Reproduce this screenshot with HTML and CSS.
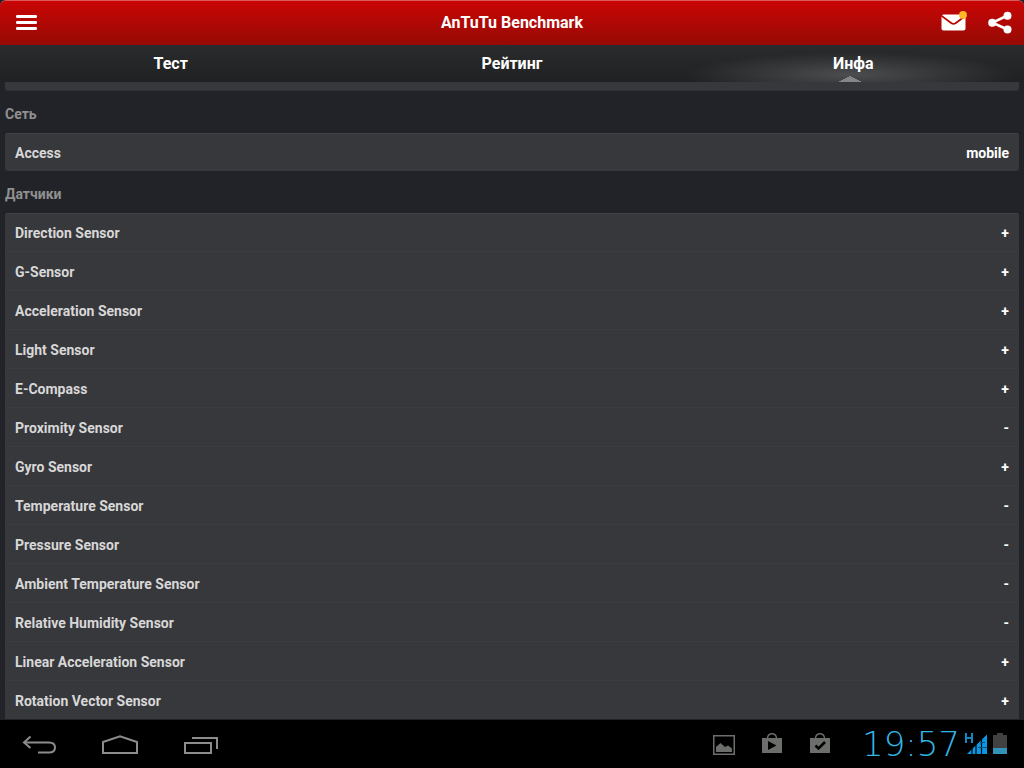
FILE: index.html
```html
<!DOCTYPE html>
<html lang="ru">
<head>
<meta charset="utf-8">
<meta name="viewport" content="width=device-width, initial-scale=1">
<title>AnTuTu Benchmark</title>
<link rel="stylesheet" href="styles.css">
</head>
<body>
<header class="topbar">
  <button class="icon-btn" type="button" aria-label="Menu">
    <svg width="22" height="16" viewBox="0 0 22 16" fill="#fff"><rect x="0" y="0" width="21" height="3" rx="1.3"/><rect x="0" y="6" width="21" height="3" rx="1.3"/><rect x="0" y="12" width="21" height="3" rx="1.3"/></svg>
  </button>
  <h1 class="app-title">AnTuTu Benchmark</h1>
  <div class="actions">
    <button class="icon-btn" type="button" aria-label="Messages">
      <svg width="26" height="24" viewBox="0 0 26 24"><path d="M0.5 5.500 Q0.5 3.500 2.5 3.500 H22.5 Q24.5 3.500 24.5 5.500 V17.500 Q24.5 19.500 22.5 19.500 H2.500 Q0.500 19.500 0.500 17.500Z" fill="#fff"/><path d="M0 4.500 L10.500 12.200 Q12.500 13.500 14.500 12.200 L25 4.500" fill="none" stroke="#b80703" stroke-width="1.800"/><circle cx="22" cy="3.900" r="3.900" fill="#fdb927"/></svg>
    </button>
    <button class="icon-btn" type="button" aria-label="Share">
      <svg width="24" height="24" viewBox="0 0 24 24" fill="#fff"><path d="M19.500 4.500 L4.500 11.700 L19.500 18.500" fill="none" stroke="#fff" stroke-width="2.600"/><circle cx="4.200" cy="11.700" r="4"/><circle cx="19.500" cy="4.800" r="4"/><circle cx="19.500" cy="18.400" r="4"/></svg>
    </button>
  </div>
</header>
<nav class="tabs">
  <button class="tab" type="button">Тест</button>
  <button class="tab" type="button">Рейтинг</button>
  <button class="tab tab-active" type="button" aria-current="page">Инфа</button>
</nav>
<main class="content">
  <div class="panel panel-end"></div>
  <h2 class="section-title">Сеть</h2>
  <table class="panel">
    <tbody>
      <tr><th scope="row">Access</th><td>mobile</td></tr>
    </tbody>
  </table>
  <h2 class="section-title">Датчики</h2>
  <table class="panel panel-open">
    <tbody>
      <tr><th scope="row">Direction Sensor</th><td>+</td></tr>
      <tr><th scope="row">G-Sensor</th><td>+</td></tr>
      <tr><th scope="row">Acceleration Sensor</th><td>+</td></tr>
      <tr><th scope="row">Light Sensor</th><td>+</td></tr>
      <tr><th scope="row">E-Compass</th><td>+</td></tr>
      <tr><th scope="row">Proximity Sensor</th><td>-</td></tr>
      <tr><th scope="row">Gyro Sensor</th><td>+</td></tr>
      <tr><th scope="row">Temperature Sensor</th><td>-</td></tr>
      <tr><th scope="row">Pressure Sensor</th><td>-</td></tr>
      <tr><th scope="row">Ambient Temperature Sensor</th><td>-</td></tr>
      <tr><th scope="row">Relative Humidity Sensor</th><td>-</td></tr>
      <tr><th scope="row">Linear Acceleration Sensor</th><td>+</td></tr>
      <tr><th scope="row">Rotation Vector Sensor</th><td>+</td></tr>
    </tbody>
  </table>
</main>
<footer class="sysbar">
  <div class="sys-keys">
    <button class="sys-btn" type="button" aria-label="Back">
      <svg width="36" height="20" viewBox="0 0 36 20" fill="none" stroke="#8c8c8c" stroke-width="2"><path d="M2 7.500 H27 Q33 7.500 33 12.500 Q33 17.500 27 17.500 H16"/><path d="M8.500 1.500 L2 7.500 L8.500 13"/></svg>
    </button>
    <button class="sys-btn" type="button" aria-label="Home">
      <svg width="36" height="20" viewBox="0 0 36 20" fill="none" stroke="#8c8c8c" stroke-width="2"><path d="M1 18 V7 L18 1.200 L35 7 V18Z"/></svg>
    </button>
    <button class="sys-btn" type="button" aria-label="Recent apps">
      <svg width="36" height="20" viewBox="0 0 36 20" fill="none" stroke="#8c8c8c" stroke-width="2"><rect x="3" y="8" width="26" height="10"/><path d="M10 3 H35 V14"/></svg>
    </button>
  </div>
  <div class="status">
    <svg width="22" height="22" viewBox="0 0 22 22"><rect x="0.750" y="2.750" width="20.500" height="18.500" fill="none" stroke="#6c6e6c" stroke-width="1.500"/><path d="M3 19 V14 L7.500 10 L12 14 L15 12.500 L19 15.500 V19Z" fill="#6c6e6c"/></svg>
    <svg width="22" height="22" viewBox="0 0 22 22"><path d="M6.500 5 Q7 0.700 11 0.700 T15.500 5" fill="none" stroke="#6c6e6c" stroke-width="1.400"/><rect x="1" y="5" width="20" height="15" fill="#6c6e6c"/><path d="M7 8 L15.500 12.500 L7 17Z" fill="#000"/></svg>
    <svg width="22" height="22" viewBox="0 0 22 22"><path d="M6.500 5 Q7 0.700 11 0.700 T15.500 5" fill="none" stroke="#6c6e6c" stroke-width="1.400"/><rect x="1" y="5" width="20" height="15" fill="#6c6e6c"/><path d="M6.500 12.500 L9.500 15.500 L16 9" fill="none" stroke="#000" stroke-width="2.600"/></svg>
    <time class="clock">19:57</time>
    <div class="signals">
      <svg width="24" height="22" viewBox="0 0 24 22"><path d="M2 0 V10 M8 0 V10 M2 5 H8" fill="none" stroke="#1187c4" stroke-width="2"/><path d="M3 21 L23 1.500 V21Z" fill="#0799e8"/><path d="M8 14 V22 M12 10 V22 M17.500 5 V22" stroke="#000" stroke-width="1.200"/><path d="M16 9.500 H21 M14 14.500 H23" stroke="#05506f" stroke-width="1.200"/></svg>
      <svg width="14" height="22" viewBox="0 0 14 22"><path d="M0 2 H4 V0 H10 V2 H14 V15 H0Z" fill="#414141"/><rect y="15" width="14" height="6" fill="#3292b9"/></svg>
    </div>
  </div>
</footer>
</body>
</html>
```
FILE: styles.css
```css
* {
  box-sizing: border-box;
}

body {
  margin: 0;
  height: 100vh;
  display: flex;
  flex-direction: column;
  background: #222328;
  color: #fff;
  font-family: Roboto, "Noto Sans", sans-serif;
  font-size: 14px;
  font-weight: 700;
}

button {
  border: 0;
  padding: 0;
  background: none;
  color: inherit;
  font: inherit;
  cursor: pointer;
}

svg {
  display: block;
}

.topbar {
  flex: none;
  display: grid;
  grid-template-columns: 1fr auto 1fr;
  align-items: center;
  height: 45px;
  padding: 0 12px 0 16px;
  border-top: 1px solid #d95a58;
  border-radius: 6px 6px 0 0;
  background: linear-gradient(#c90605, #960a05);
}

.icon-btn {
  justify-self: start;
}

.app-title {
  margin: 0;
  padding-right: 4px;
  font-size: 16px;
  line-height: 20px;
}

.actions {
  display: flex;
  justify-content: flex-end;
  align-items: center;
  gap: 21px;
}

.tabs {
  flex: none;
  display: grid;
  grid-template-columns: repeat(3, 1fr);
  height: 37px;
  background: linear-gradient(#292b2c, #202122);
}

.tab {
  font-size: 16px;
}

.tab-active {
  background:
    conic-gradient(from 116deg at 50% 0, #858587 128deg, transparent 0) 49% bottom / 26px 6px no-repeat,
    radial-gradient(ellipse 48% 22px at 49% 80%, #4c4d4e, transparent);
}

.content {
  flex: 1;
  min-height: 0;
  overflow: hidden;
  padding: 0 5px;
}

.panel {
  width: 100%;
  border-spacing: 0;
  border-radius: 3px;
  background: #37383b;
  box-shadow: inset 0 1px #424346;
}

.panel-end {
  height: 9px;
  border-radius: 0 0 3px 3px;
  box-shadow: inset 0 -1px #303134;
}

.panel-open {
  border-radius: 3px 3px 0 0;
}

.section-title {
  margin: 0;
  padding-top: 4px;
  color: #909091;
  font-size: 14px;
  line-height: 38px;
}

.panel th,
.panel td {
  height: 39px;
  padding: 2px 10px 0;
  border-bottom: 1px solid #3b3c3f;
}

.panel tr:last-child > * {
  height: 38px;
  border-bottom: 0;
}

.panel th {
  color: #d7d7d8;
  text-align: left;
}

.panel td {
  text-align: right;
}

.sysbar {
  flex: none;
  display: flex;
  justify-content: space-between;
  align-items: center;
  height: 48px;
  padding: 0 17px 0 22px;
  background: #000;
}

.sys-keys {
  display: flex;
  gap: 44px;
  padding-top: 2px;
}

.status {
  display: flex;
  align-items: center;
  gap: 26px;
}

.clock {
  margin-left: 5px;
  color: #33b5e5;
  font-family: "DejaVu Sans Light", "DejaVu Sans", sans-serif;
  font-size: 34px;
  font-weight: 200;
  line-height: 40px;
}

.signals {
  display: flex;
  gap: 5px;
  margin-left: -22px;
}
```
